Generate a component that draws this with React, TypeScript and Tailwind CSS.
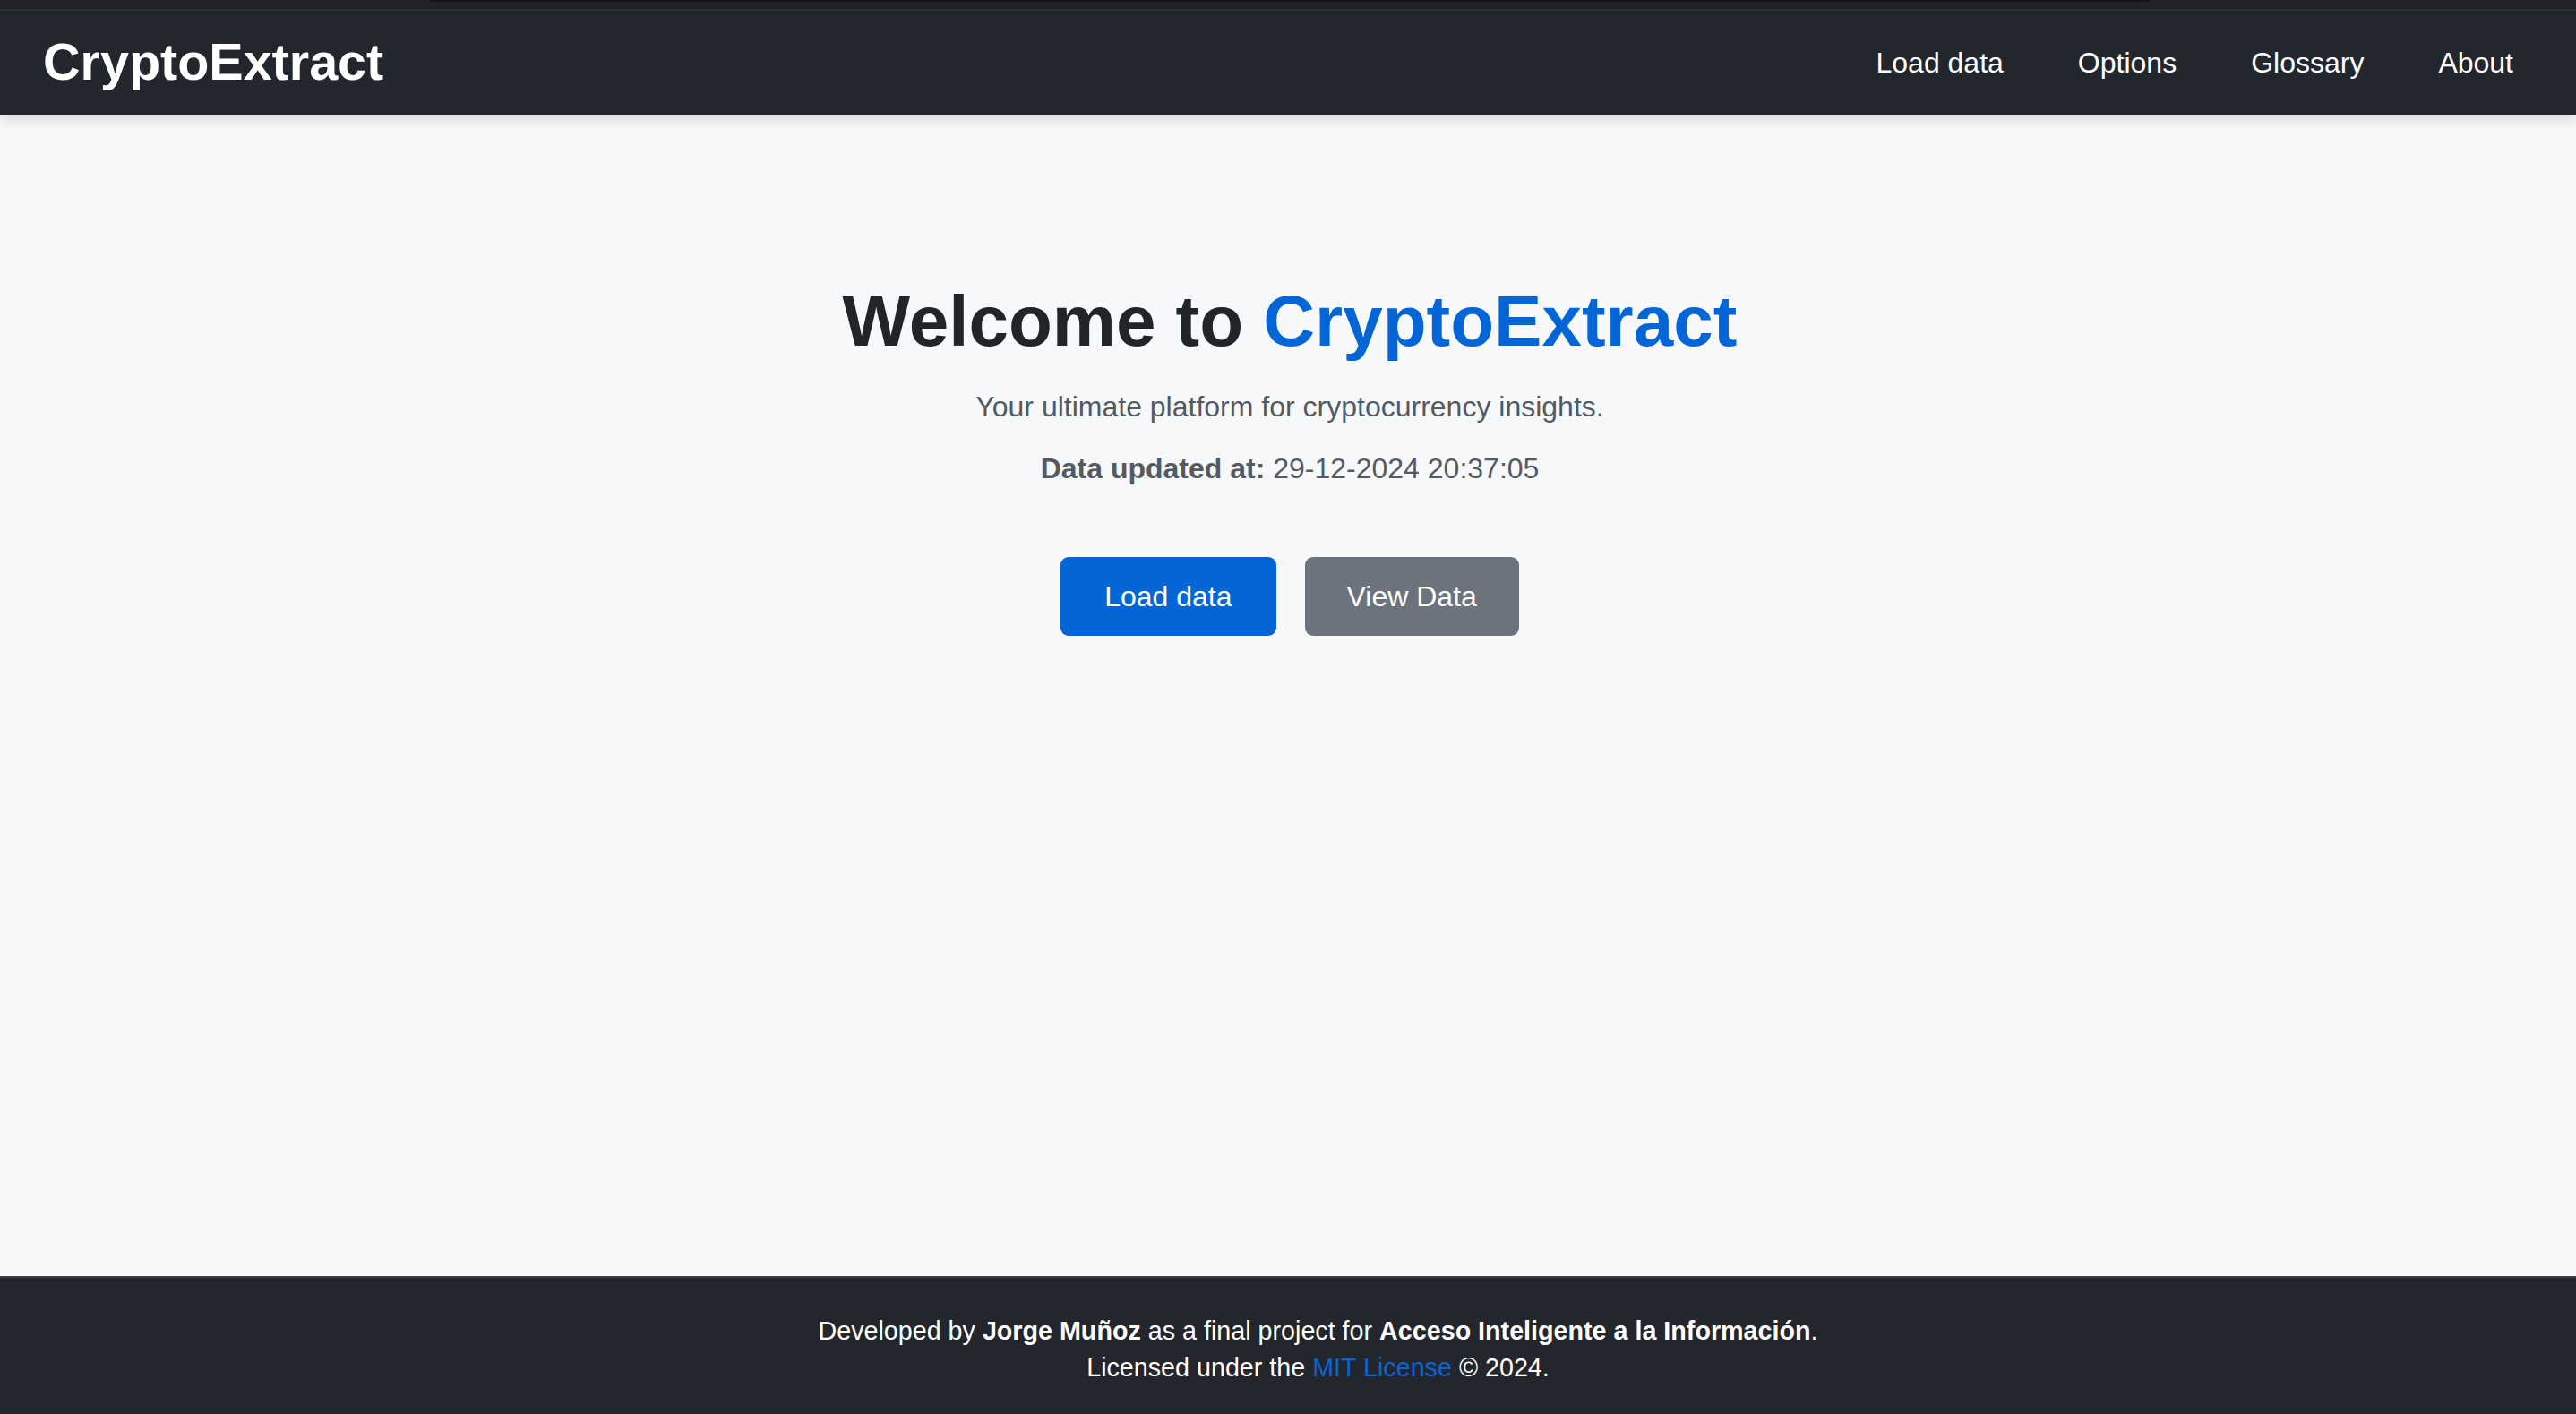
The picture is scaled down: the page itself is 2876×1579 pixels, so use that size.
import React from 'react';

const font = { fontFamily: '"Liberation Sans", Arial, sans-serif' };

function Navbar() {
    const links = ['Load data', 'Options', 'Glossary', 'About'];
    return (
        <nav className="h-[116px] bg-[#22272e] flex items-center justify-between pl-[48px] pr-[70px] shadow-[0_6px_14px_rgba(0,0,0,0.12)] relative z-10">
            <a className="text-white font-bold text-[57.5px] leading-none">CryptoExtract</a>
            <ul className="flex items-center gap-[83px]">
                {links.map((l) => (
                    <li key={l}>
                        <a className="text-white text-[32px] leading-[48px]">{l}</a>
                    </li>
                ))}
            </ul>
        </nav>
    );
}

export default function App() {
    return (
        <div style={font} className="h-[1579px] flex flex-col bg-[#f7f8fa] overflow-hidden">
            <div className="h-[10px] bg-[#232327] flex justify-start">
                <div className="ml-[480px] w-[1920px] h-[2px] bg-[#141416] rounded-b" />
            </div>
            <div className="h-[2px] bg-[#2f2f33]" />
            <Navbar />

            <main className="flex-1 flex flex-col items-center pt-[183px] pl-[4px] text-center">
                <h1 className="text-[80px] leading-[96px] font-bold text-[#212529]">
                    Welcome to <span className="text-[#0466d6]">CryptoExtract</span>
                </h1>
                <p className="mt-[23px] text-[32px] leading-[48px] text-[#535a62]">
                    Your ultimate platform for cryptocurrency insights.
                </p>
                <p className="mt-[21px] text-[32px] leading-[48px] text-[#535a62]">
                    <span className="font-bold">Data updated at:</span> 29-12-2024 20:37:05
                </p>
                <div className="mt-[75px] flex gap-[32px]">
                    <button className="bg-[#0466d6] text-white text-[32px] leading-[48px] px-[49px] py-[20px] rounded-[9px]">
                        Load data
                    </button>
                    <button className="bg-[#6c737c] text-white text-[32px] leading-[48px] px-[47px] py-[20px] rounded-[9px]">
                        View Data
                    </button>
                </div>
            </main>

            <footer className="h-[154px] border-t-2 border-[#3d4147] bg-[#23272d] text-white text-center text-[28.7px] leading-[41px] pt-[39px] pl-[67px]">
                <p>
                    Developed by <strong>Jorge Muñoz</strong> as a final project for{' '}
                    <strong>Acceso Inteligente a la Información</strong>.
                </p>
                <p>
                    Licensed under the <a className="text-[#0b63d4]">MIT License</a> © 2024.
                </p>
            </footer>
        </div>
    );
}
